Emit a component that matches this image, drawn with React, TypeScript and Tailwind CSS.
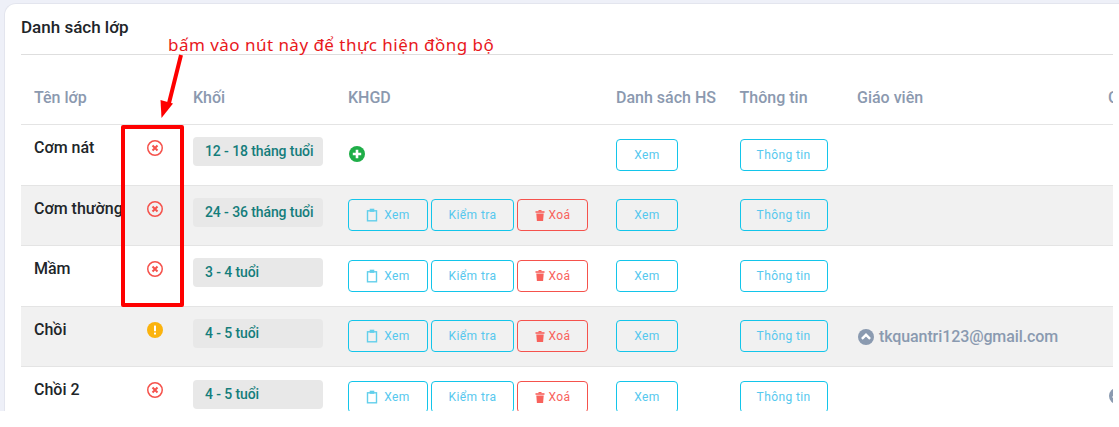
const columns =
  "grid grid-cols-[112px_60px_155px_268px_123.6px_117.4px_251px_60px]";

const rows = [
  { name: "Cơm nát", level: "12 - 18 tháng tuổi", status: "error", plan: false },
  { name: "Cơm thường", level: "24 - 36 tháng tuổi", status: "error", plan: true },
  { name: "Mầm", level: "3 - 4 tuổi", status: "error", plan: true },
  { name: "Chồi", level: "4 - 5 tuổi", status: "warning", plan: true, teacher: "tkquantri123@gmail.com" },
  { name: "Chồi 2", level: "4 - 5 tuổi", status: "error", plan: true, extra: true },
];

function ErrorIcon() {
  return (
    <svg width="16" height="16" viewBox="0 0 16 16" fill="none" stroke="#f5524c">
      <circle cx="8" cy="8" r="7.25" strokeWidth="1.5" />
      <path d="M5.5 5.500l5 5M10.500 5.500l-5 5" strokeWidth="2" />
    </svg>
  );
}

function WarningIcon() {
  return (
    <svg width="16" height="16" viewBox="0 0 16 16">
      <circle cx="8" cy="8" r="8" fill="#fbb30d" />
      <rect x="7" y="3.4" width="2" height="5.8" rx="0.5" fill="#fff" />
      <rect x="7" y="10.4" width="2" height="2" rx="0.5" fill="#fff" />
    </svg>
  );
}

function PlusIcon() {
  return (
    <svg width="16" height="16" viewBox="0 0 16 16">
      <circle cx="8" cy="8" r="8" fill="#1fae48" />
      <path d="M8 3.8v8.4M3.8 8h8.4" stroke="#fff" strokeWidth="2.6" />
    </svg>
  );
}

function ChevronCircle() {
  return (
    <svg width="16" height="16" viewBox="0 0 16 16" className="shrink-0">
      <circle cx="8" cy="8" r="8" fill="#8a9ab0" />
      <path d="M3.9 9.800L8 5.800l4.100 4" fill="none" stroke="#fff" strokeWidth="2.4" />
    </svg>
  );
}

function ClipboardIcon() {
  return (
    <svg width="12" height="14" viewBox="0 0 12 14" fill="none" stroke="#62cfeb" className="shrink-0">
      <rect x="1.5" y="2.8" width="9" height="10" strokeWidth="1.4" />
      <rect x="4" y="1" width="4" height="2.6" fill="#62cfeb" strokeWidth="0.6" />
    </svg>
  );
}

function TrashIcon() {
  return (
    <svg width="10" height="11" viewBox="0 0 10 11" className="shrink-0">
      <rect x="0.5" y="1.2" width="9" height="1.6" fill="#f8625c" />
      <rect x="3.5" y="0" width="3" height="1.4" fill="#f8625c" />
      <path d="M1.3 3.400h7.400l-.6 7.600H1.900z" fill="#f8625c" />
    </svg>
  );
}

function CyanButton({ className, children }: { className: string; children: React.ReactNode }) {
  return (
    <button
      className={`flex h-8 items-center justify-center gap-[6px] rounded border border-[#13c5ea] text-xs tracking-[0.4px] text-[#56c8ee] ${className}`}
    >
      {children}
    </button>
  );
}

export default function App() {
  return (
    <div className="relative h-[427px] w-[1119px] overflow-hidden bg-white font-['Roboto',sans-serif]">
      <div className="h-[411px] overflow-hidden bg-[#eef0f8] pl-1 pt-[3px]">
        <div className="h-[420px] rounded-tl-[12px] border-l border-t border-[#e3e5ee] bg-white pl-4">
          <div className="w-[1092px] overflow-hidden">
            <div className="h-[51px] border-b border-[#dedede] pt-[11px] text-[17px] font-medium leading-6 text-[#212529]">
              Danh sách lớp
            </div>

            <div className={`${columns} h-[70px] items-center border-b border-[#e4e4e4] pt-[16px] text-base font-medium text-[#8b99af]`}>
              <div className="pl-[13px]">Tên lớp</div>
              <div />
              <div>Khối</div>
              <div>KHGD</div>
              <div>Danh sách HS</div>
              <div>Thông tin</div>
              <div>Giáo viên</div>
              <div>G</div>
            </div>

            {rows.map((row, i) => (
              <div
                key={row.name}
                className={`${columns} h-[60.6px] border-b border-[#e4e4e4] ${i % 2 === 1 ? "bg-[#f1f1f1]" : "bg-white"}`}
              >
                <div className="whitespace-nowrap pl-[13px] pt-[11px] text-base font-medium leading-6 text-[#212529]">
                  {row.name}
                </div>
                <div className="pl-[14px] pt-[15px]">
                  {row.status === "error" ? <ErrorIcon /> : <WarningIcon />}
                </div>
                <div className="pt-[12.2px]">
                  <div className="flex h-[29px] w-[130px] items-center rounded bg-[#e8e8e8] pb-px pl-3 text-sm font-medium tracking-[-0.1px] text-[#147d7b]">
                    {row.level}
                  </div>
                </div>
                {row.plan ? (
                  <div className="flex gap-[3px] pt-[13.7px]">
                    <CyanButton className="w-20">
                      <ClipboardIcon />
                      Xem
                    </CyanButton>
                    <CyanButton className="w-[83px]">Kiểm tra</CyanButton>
                    <button className="flex h-8 w-[71px] items-center justify-center gap-[4px] rounded border border-[#f5524c] text-xs tracking-[0.4px] text-[#f8625c]">
                      <TrashIcon />
                      Xoá
                    </button>
                  </div>
                ) : (
                  <div className="pl-px pt-[21px]">
                    <PlusIcon />
                  </div>
                )}
                <div className="pt-[13.7px]">
                  <CyanButton className="w-[62px]">Xem</CyanButton>
                </div>
                <div className="pt-[13.7px]">
                  <CyanButton className="w-[88px]">Thông tin</CyanButton>
                </div>
                <div>
                  {row.teacher ? (
                    <div className="flex items-center gap-[5px] pl-px pt-[20px] text-base font-medium leading-5 tracking-[-0.1px] text-[#8a9ab0]">
                      <ChevronCircle />
                      {row.teacher}
                    </div>
                  ) : null}
                </div>
                <div className="pl-px pt-[21px]">{row.extra ? <ChevronCircle /> : null}</div>
              </div>
            ))}
          </div>
        </div>
      </div>

      <div className="absolute left-[168px] top-[33px] whitespace-nowrap font-['Noto_Sans',sans-serif] text-[17px] leading-6 tracking-[0.47px] text-[#e8181c]">
        bấm vào nút này để thực hiện đồng bộ
      </div>
      <svg className="absolute left-[155px] top-[52px]" width="32" height="70" viewBox="0 0 32 70">
        <path d="M26 3L14 51" stroke="#fe0000" strokeWidth="4" />
        <path d="M5.500 48L18 51.500L6.500 66z" fill="#fe0000" />
      </svg>
      <div className="absolute left-[121px] top-[125px] h-[182px] w-[63px] rounded-[2px] border-4 border-[#fe0000]" />
    </div>
  );
}
